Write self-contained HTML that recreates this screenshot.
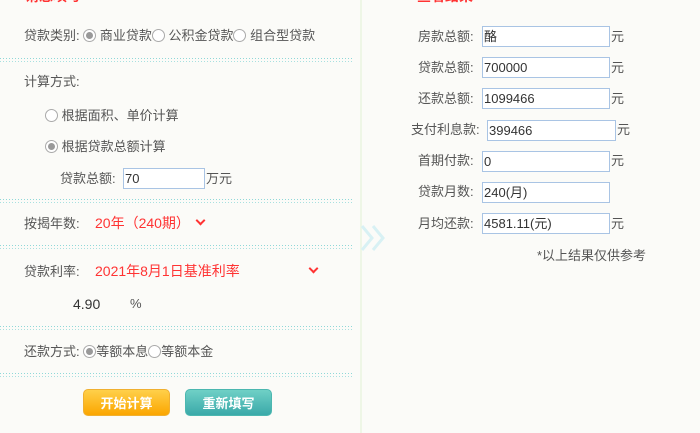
<!DOCTYPE html>
<html><head><meta charset="utf-8"><style>
*{margin:0;padding:0;box-sizing:border-box}
body{width:700px;height:433px;overflow:hidden;background:#fbfbf8;font-family:"Liberation Sans","Noto Sans CJK SC",sans-serif;font-size:13px;color:#555;position:relative}
.a{position:absolute;white-space:nowrap;line-height:16px}
.dot{position:absolute;left:0;width:352px;height:4px;background:repeating-linear-gradient(90deg,#8fd8d8 0 1px,transparent 1px 3px) top/100% 1px no-repeat,repeating-linear-gradient(90deg,#a8e0e0 0 1px,transparent 1px 3px) bottom/100% 1px no-repeat}
.red{color:#f33;font-size:14px}
.rad{display:inline-block;width:13px;height:13px;border:1px solid #aaa;border-radius:50%;background:#fff;vertical-align:-2px;position:relative}
.rad.on::after{content:"";position:absolute;left:2px;top:2px;width:7px;height:7px;border-radius:50%;background:#999}
.in{position:absolute;height:21px;border:1px solid #a9c4e4;background:#fff;color:#333;font-size:13px;line-height:19px;padding-left:1px}
.btn{position:absolute;top:389px;width:87px;height:27px;border-radius:5px;color:#fff;font-size:13px;text-align:center;line-height:27px;font-weight:bold}
.chev{position:absolute;width:7px;height:7px;border-right:2px solid #f33;border-bottom:2px solid #f33;transform:rotate(45deg)}
</style></head><body>
<div class="a red" style="left:25px;top:-12px;font-weight:bold">请您填写</div>
<div class="a red" style="left:417px;top:-12px;font-weight:bold">查看结果</div>
<div style="position:absolute;left:360px;top:0;width:2px;height:433px;background:#eef6e6"></div>
<svg style="position:absolute;left:358px;top:222px" width="32" height="32"><path d="M4 4 L14 16 L4 28 M15 4 L25 16 L15 28" stroke="#d8f1f4" stroke-width="3" fill="none"/></svg>

<div class="a" style="left:24px;top:28px">贷款类别: <span class="rad on"></span> 商业贷款<span class="rad"></span> 公积金贷款<span class="rad"></span> 组合型贷款</div>
<div class="dot" style="top:58px"></div>
<div class="a" style="left:24px;top:74px">计算方式:</div>
<div class="a" style="left:45px;top:108px"><span class="rad"></span> 根据面积、单价计算</div>
<div class="a" style="left:45px;top:139px"><span class="rad on"></span> 根据贷款总额计算</div>
<div class="a" style="left:60px;top:171px">贷款总额:</div>
<div class="in" style="left:123px;top:168px;width:82px">70</div>
<div class="a" style="left:206px;top:171px">万元</div>
<div class="dot" style="top:199px"></div>
<div class="a" style="left:24px;top:216px">按揭年数:</div>
<div class="a red" style="left:95px;top:215px">20年（240期）</div>
<div class="chev" style="left:197px;top:217px"></div>
<div class="dot" style="top:245px"></div>
<div class="a" style="left:24px;top:264px">贷款利率:</div>
<div class="a red" style="left:95px;top:263px">2021年8月1日基准利率</div>
<div class="chev" style="left:310px;top:265px"></div>
<div class="a" style="left:73px;top:296px;font-size:14px;color:#333">4.90</div>
<div class="a" style="left:130px;top:296px">%</div>
<div class="dot" style="top:326px"></div>
<div class="a" style="left:24px;top:344px">还款方式: <span class="rad on"></span>等额本息<span class="rad"></span>等额本金</div>
<div class="dot" style="top:373px"></div>
<div class="btn" style="left:83px;background:linear-gradient(#ffd04a,#fba600);border:1px solid #f0b030">开始计算</div>
<div class="btn" style="left:185px;background:linear-gradient(#6fd0c6,#3aa9a9);border:1px solid #4cb7b0">重新填写</div>

<div class="a" style="left:418px;top:29px">房款总额:</div><div class="in" style="left:482px;top:26px;width:128px">酪</div><div class="a" style="left:611px;top:29px">元</div>
<div class="a" style="left:418px;top:60px">贷款总额:</div><div class="in" style="left:482px;top:57px;width:128px">700000</div><div class="a" style="left:611px;top:60px">元</div>
<div class="a" style="left:418px;top:91px">还款总额:</div><div class="in" style="left:482px;top:88px;width:128px">1099466</div><div class="a" style="left:611px;top:91px">元</div>
<div class="a" style="left:411px;top:122px">支付利息款:</div><div class="in" style="left:487px;top:120px;width:129px">399466</div><div class="a" style="left:617px;top:122px">元</div>
<div class="a" style="left:418px;top:153px">首期付款:</div><div class="in" style="left:482px;top:151px;width:128px">0</div><div class="a" style="left:611px;top:153px">元</div>
<div class="a" style="left:418px;top:184px">贷款月数:</div><div class="in" style="left:482px;top:182px;width:128px">240(月)</div>
<div class="a" style="left:418px;top:216px">月均还款:</div><div class="in" style="left:482px;top:213px;width:128px">4581.11(元)</div><div class="a" style="left:611px;top:216px">元</div>
<div class="a" style="left:537px;top:248px">*以上结果仅供参考</div>
</body></html>
